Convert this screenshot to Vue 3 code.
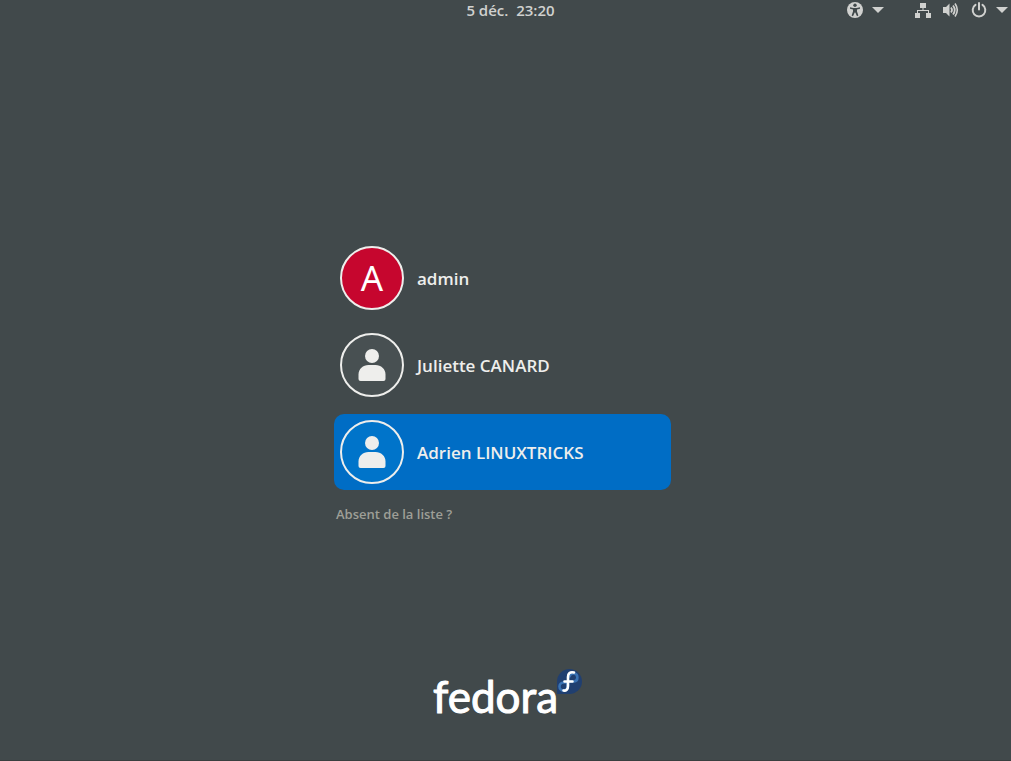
<script setup>
import { ref } from 'vue'

const users = [
  { id: 'admin', name: 'admin', initial: 'A' },
  { id: 'juliette', name: 'Juliette CANARD' },
  { id: 'adrien', name: 'Adrien LINUXTRICKS' },
]
const selected = ref('adrien')
</script>

<template>
  <div class="screen">
    <header class="panel">
      <time class="clock">5 déc.&nbsp; 23:20</time>
      <div class="indicators">
        <button class="indicator" type="button" aria-label="Accessibilité">
          <svg width="16" height="16" viewBox="0 0 16 16">
            <circle cx="8" cy="8" r="8" fill="#d0d1cf" />
            <g fill="#41494b">
              <circle cx="8" cy="3.3" r="1.7" />
              <path d="M3 5.2l3.3.7h3.4l3.3-.7v1.5l-3 .9v2l1.4 4-1.4.6L8.3 10.500h-.6L6 14.200l-1.400-.6 1.400-4v-2l-3-.9z" />
            </g>
          </svg>
          <svg width="12" height="6" viewBox="0 0 12 6"><path d="M0 0h12L6 6z" fill="#d0d1cf" /></svg>
        </button>
        <button class="indicator system" type="button" aria-label="Menu système">
          <svg width="16" height="16" viewBox="0 0 16 16" fill="#d0d1cf">
            <path d="M5 1h6v5H8.500v2H14v3h2v5h-5v-5h2V9H3v2h2v5H0v-5h2V8h5.500V6H5z" />
          </svg>
          <svg width="16" height="16" viewBox="0 0 16 16" fill="none" stroke="#d0d1cf">
            <path d="M0 5h3l3.500-3.500v13L3 11H0z" fill="#d0d1cf" stroke="none" />
            <path d="M8 5.500q2 2.500 0 5" stroke-width="1.800" />
            <path d="M10 3.500q3.500 4.500 0 9" stroke-width="1.800" />
            <path d="M12 1.500q4.600 6.500 0 13" stroke-width="1.600" />
          </svg>
          <svg width="16" height="16" viewBox="0 0 16 16" fill="none" stroke="#d0d1cf" stroke-width="2">
            <path d="M4.500 2.900a6.300 6.300 0 1 0 7 0" stroke-linecap="round" />
            <path d="M8 1v6.500" stroke-linecap="round" />
          </svg>
          <svg class="arrow" width="12" height="6" viewBox="0 0 12 6"><path d="M0 0h12L6 6z" fill="#d0d1cf" /></svg>
        </button>
      </div>
    </header>

    <main class="login">
      <ul class="users">
        <li v-for="user in users" :key="user.id">
          <button
            type="button"
            class="user"
            :class="{ selected: selected === user.id }"
            @click="selected = user.id"
          >
            <span class="avatar" :class="{ lettered: user.initial }">
              <span v-if="user.initial" aria-hidden="true">{{ user.initial }}</span>
              <svg v-else width="28" height="32" viewBox="0 0 28 32" fill="#eeeeec" aria-hidden="true">
                <circle cx="14" cy="7" r="7" />
                <path d="M10.500 16h7C23 16 27.500 20 27.500 25.500V30q0 2-2 2h-23q-2 0-2-2v-4.500C.5 20 5 16 10.500 16z" />
              </svg>
            </span>
            <span class="name">{{ user.name }}</span>
          </button>
        </li>
      </ul>
      <button class="unlisted" type="button">Absent de la liste ?</button>
    </main>

    <footer class="branding">
      <svg width="150" height="54" viewBox="0 0 150 54" role="img" aria-label="fedora">
        <text class="wordmark" x="0" y="45">fedora</text>
        <path d="M124 26V13.500A12.500 12.500 0 1 1 136.500 26z" fill="#203f70" />
        <g fill="none" stroke-linecap="round">
          <path d="M133 14.500h-2.500a4 4 0 1 0 4 4v-3M136.500 13.500h4.500a4 4 0 1 0-4.500-5" stroke="#3a73b4" stroke-width="2.600" />
          <path d="M141 4.500c-4-1-6 1-6 4.500v9c0 3.500-2 5-4.500 4.500M131.500 13.500h8" stroke="#fff" stroke-width="2.600" />
        </g>
      </svg>
    </footer>
  </div>
</template>

<style>
body {
  margin: 0;
  background: #41494b;
}
</style>

<style scoped>
.screen {
  box-sizing: border-box;
  min-height: 100vh;
  display: grid;
  grid-template-rows: 1fr auto 1fr;
  background: #41494b;
  border-bottom: 1px solid #393f3f;
  color: #eeeeec;
  font-family: "Open Sans", "Noto Sans", sans-serif;
}

button {
  margin: 0;
  padding: 0;
  border: 0;
  background: none;
  color: inherit;
  font: inherit;
  text-align: left;
  cursor: pointer;
}

svg {
  display: block;
  flex: none;
}

.panel {
  align-self: start;
  display: grid;
  grid-template-columns: 1fr auto 1fr;
  align-items: center;
  height: 20px;
}

.clock {
  grid-column: 2;
  padding-left: 10px;
  color: #d0d1cf;
  font-size: 15px;
  font-weight: 600;
  line-height: 20px;
}

.indicators {
  justify-self: end;
  display: flex;
  gap: 31px;
  padding-right: 3px;
}

.indicator {
  display: flex;
  align-items: center;
  gap: 9px;
}

.system {
  gap: 12px;
}

.system .arrow {
  margin-left: -3px;
}

.login {
  justify-self: center;
  width: 337px;
  max-width: 100%;
  padding: 2px 6px 0 0;
}

.users {
  display: flex;
  flex-direction: column;
  gap: 11px;
  margin: 0;
  padding: 0;
  list-style: none;
}

.user {
  display: flex;
  align-items: center;
  gap: 13px;
  width: 100%;
  padding: 6px;
  border-radius: 10px;
}

.user.selected {
  background: #006dc5;
}

.avatar {
  box-sizing: border-box;
  display: flex;
  align-items: center;
  justify-content: center;
  width: 64px;
  height: 64px;
  border: 2px solid #eeeeec;
  border-radius: 50%;
  background: rgba(255, 255, 255, 0.04);
}

.selected .avatar {
  background: #0074ca;
}

.avatar.lettered {
  background: #c6062e;
  color: #fff;
  font-family: "Noto Sans", sans-serif;
  font-size: 35px;
  line-height: 40px;
}

.name {
  padding-top: 2px;
  font-size: 17px;
  font-weight: 600;
  line-height: 24px;
}

.unlisted {
  display: block;
  margin-top: 15px;
  padding-left: 2px;
  color: #9e9f97;
  font-size: 13px;
  font-weight: 600;
  line-height: 18px;
}

.branding {
  align-self: end;
  justify-self: center;
  padding: 0 0 38px 5px;
}

.wordmark {
  fill: #fff;
  stroke: #fff;
  stroke-width: 1px;
  stroke-linejoin: round;
  font-family: Lato, "Open Sans", sans-serif;
  font-size: 44px;
  font-weight: 400;
}
</style>
